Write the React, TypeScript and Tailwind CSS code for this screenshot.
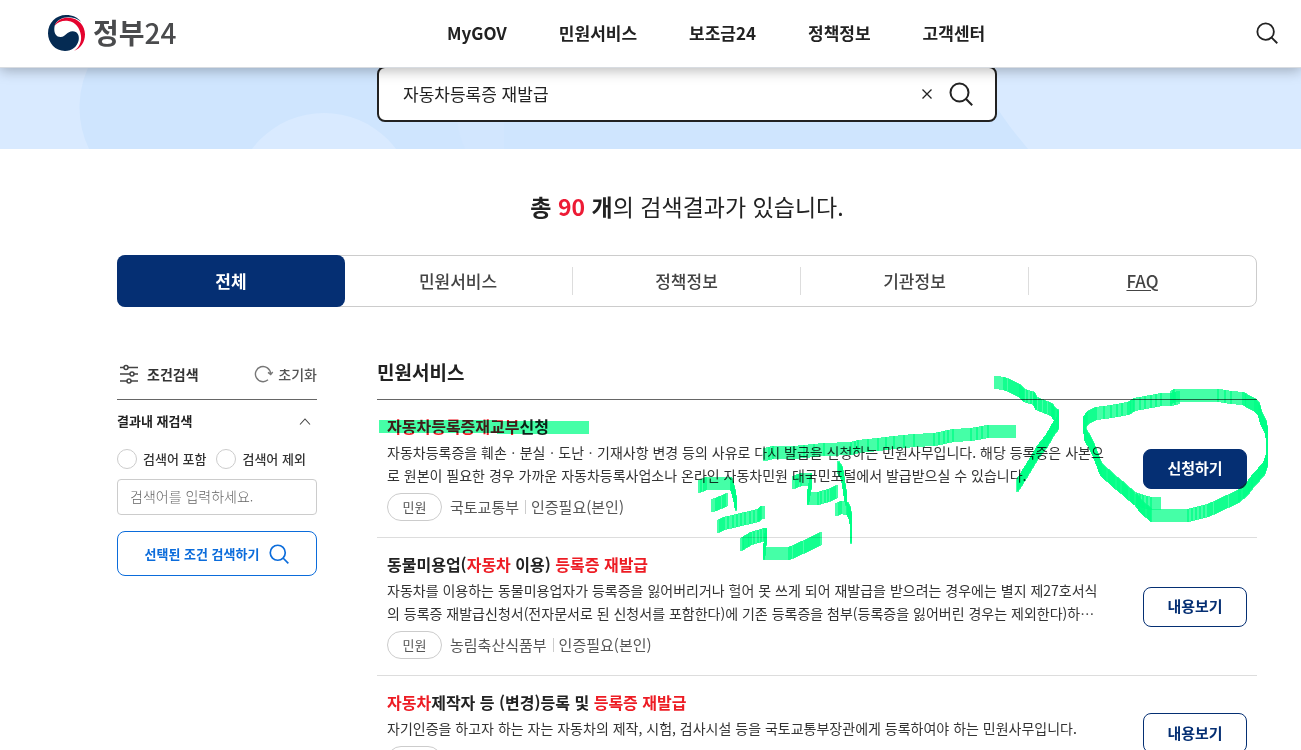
import React from "react";

type Point = [number, number];
type Part = { text: string; hit?: boolean };
type Result = {
  title: Part[];
  lines: string[];
  agency: string;
  action: string;
  primary?: boolean;
};

const navItems = ["MyGOV", "민원서비스", "보조금24", "정책정보", "고객센터"];
const tabs = ["전체", "민원서비스", "정책정보", "기관정보", "FAQ"];

const results: Result[] = [
  {
    title: [{ text: "자동차등록증재교부", hit: true }, { text: "신청" }],
    lines: [
      "자동차등록증을 훼손ㆍ분실ㆍ도난ㆍ기재사항 변경 등의 사유로 다시 발급을 신청하는 민원사무입니다. 해당 등록증은 사본으",
      "로 원본이 필요한 경우 가까운 자동차등록사업소나 온라인 자동차민원 대국민포털에서 발급받으실 수 있습니다.",
    ],
    agency: "국토교통부",
    action: "신청하기",
    primary: true,
  },
  {
    title: [
      { text: "동물미용업(" },
      { text: "자동차", hit: true },
      { text: " 이용) " },
      { text: "등록증 재발급", hit: true },
    ],
    lines: [
      "자동차를 이용하는 동물미용업자가 등록증을 잃어버리거나 헐어 못 쓰게 되어 재발급을 받으려는 경우에는 별지 제27호서식",
      "의 등록증 재발급신청서(전자문서로 된 신청서를 포함한다)에 기존 등록증을 첨부(등록증을 잃어버린 경우는 제외한다)하…",
    ],
    agency: "농림축산식품부",
    action: "내용보기",
  },
  {
    title: [
      { text: "자동차", hit: true },
      { text: "제작자 등 (변경)등록 및 " },
      { text: "등록증 재발급", hit: true },
    ],
    lines: [
      "자기인증을 하고자 하는 자는 자동차의 제작, 시험, 검사시설 등을 국토교통부장관에게 등록하여야 하는 민원사무입니다.",
    ],
    agency: "국토교통부",
    action: "내용보기",
  },
];

// Top-left positions of an upright marker nib along each stroke.
const strokes: Point[][] = [
  [[379, 420], [495, 420]],
  [[497, 421], [587, 421]],
  [[763, 448], [772, 446], [793, 446], [823, 443], [850, 442], [857, 440], [877, 438], [893, 436], [913, 434], [933, 433], [952, 429], [970, 428], [987, 425], [1014, 425]],
  [[994, 376], [1003, 377], [1012, 381], [1018, 384], [1023, 389], [1033, 392], [1035, 397], [1040, 399], [1050, 403], [1053, 407], [1057, 410], [1057, 416], [1052, 423], [1045, 435], [1037, 445], [1025, 465], [1016, 479]],
  [[1159, 497], [1150, 497], [1142, 495], [1133, 492], [1123, 483], [1113, 475], [1100, 463], [1095, 450], [1090, 438], [1084, 428], [1083, 416], [1087, 411], [1095, 407], [1110, 405], [1127, 402], [1133, 398], [1150, 395], [1160, 393], [1170, 393], [1178, 391]],
  [[1170, 391], [1173, 389], [1217, 389], [1230, 391], [1242, 392], [1245, 394], [1253, 398], [1258, 403], [1260, 412], [1265, 422], [1266, 430], [1266, 453], [1263, 462], [1253, 473], [1246, 482], [1237, 490], [1220, 498], [1207, 504], [1187, 509], [1150, 509], [1140, 500], [1135, 494]],
  [[698, 480], [705, 477], [730, 477], [733, 487], [735, 498]],
  [[711, 499], [715, 498], [726, 493]],
  [[717, 520], [723, 517], [740, 513], [757, 509], [760, 506], [763, 506]],
  [[740, 538], [750, 532], [763, 528], [765, 528], [763, 547], [788, 547], [797, 543], [808, 538], [820, 532]],
  [[792, 476], [800, 473], [810, 473], [807, 492], [817, 492], [830, 488], [836, 485]],
  [[837, 461], [841, 467], [843, 480], [845, 493]],
  [[835, 503], [840, 501], [846, 502], [849, 507], [850, 517], [850, 531]],
];

const NIB_W = 2;
const NIB_H = 13;

function sweep([ax, ay]: Point, [bx, by]: Point): string {
  const [l, r] = ax <= bx ? [[ax, ay], [bx, by]] : [[bx, by], [ax, ay]];
  const down = r[1] >= l[1];
  const pts = down
    ? [[l[0], l[1]], [l[0] + NIB_W, l[1]], [r[0] + NIB_W, r[1]], [r[0] + NIB_W, r[1] + NIB_H], [r[0], r[1] + NIB_H], [l[0], l[1] + NIB_H]]
    : [[l[0], l[1]], [r[0], r[1]], [r[0] + NIB_W, r[1]], [r[0] + NIB_W, r[1] + NIB_H], [l[0] + NIB_W, l[1] + NIB_H], [l[0], l[1] + NIB_H]];
  return pts.map((p) => p.join(",")).join(" ");
}

function segments(points: Point[]): string[] {
  const out: string[] = [];
  for (let i = 1; i < points.length; i++) {
    const [ax, ay] = points[i - 1];
    const [bx, by] = points[i];
    const n = Math.max(1, Math.abs(by - ay));
    for (let k = 0; k < n; k++) {
      const at = (t: number): Point => [Math.round(ax + (bx - ax) * t), Math.round(ay + (by - ay) * t)];
      out.push(sweep(at(k / n), at((k + 1) / n)));
    }
  }
  return out;
}

function MarkerNotes() {
  return (
    <svg
      aria-hidden="true"
      width="1301"
      height="750"
      viewBox="0 0 1301 750"
      className="pointer-events-none absolute top-0 left-0 z-10 mix-blend-multiply"
    >
      <g fill="#00ff87" fillOpacity="0.73" shapeRendering="crispEdges">
        {strokes.flatMap((s, i) => segments(s).map((p, k) => <polygon key={`${i}-${k}`} points={p} />))}
      </g>
    </svg>
  );
}

function SearchIcon({ className }: { className: string }) {
  return (
    <svg viewBox="0 0 24 24" fill="none" stroke="currentColor" strokeWidth="2" className={className} aria-hidden="true">
      <circle cx="10.5" cy="10.5" r="9" />
      <path d="M16.8 16.8 23.2 23.2" />
    </svg>
  );
}

function Emblem() {
  return (
    <svg viewBox="0 0 111 108" className="h-9 w-[37px]" aria-hidden="true">
      <path
        fill="#052b53"
        d="M51 108C22 108 0 84 0 55C0 24 24 0 54 0C74 0 90 8 99 20C88 11 76 7 61 7C42 7 26 16 20 32C16 50 22 66 38 66C54 66 56 49 74 49C88 49 95 62 92 76C88 95 72 108 51 108Z"
      />
      <path
        fill="#e4032e"
        d="M20 32C27 14 45 7 62 8C92 9 111 32 111 58C111 83 97 101 78 108C94 97 101 80 99 62C96 38 82 21 61 18C45 16 30 20 20 32Z"
      />
    </svg>
  );
}

function Header() {
  return (
    <header className="sticky top-0 z-20 flex h-[68px] items-center border-b border-[#d8dce1] bg-white pr-5 pb-[2px] pl-12 shadow-[0_3px_12px_rgba(0,0,0,0.26)]">
      <a href="#home" className="flex w-[399px] items-center gap-2">
        <Emblem />
        <span className="pb-[2px] text-[28px] leading-8 font-medium text-[#4a4b4d]">
          <strong className="font-bold">정부</strong>24
        </span>
      </a>
      <nav aria-label="주 메뉴" className="flex flex-1 items-center gap-[52px] text-[17px] leading-7 font-bold text-[#222]">
        {navItems.map((n) => (
          <a key={n} href="#menu" className="whitespace-nowrap">
            {n}
          </a>
        ))}
      </nav>
      <button type="button" aria-label="검색 열기" className="p-[3px]">
        <SearchIcon className="size-[22px] text-[#222]" />
      </button>
    </header>
  );
}

function Banner() {
  return (
    <div className="relative -mt-2 h-[89px] overflow-hidden bg-[#d9eaff] pt-[6px] pr-11 pl-[117px]">
      <svg aria-hidden="true" width="1301" height="89" viewBox="0 60 1301 89" className="absolute top-0 left-0">
        <path fill="#cfe5fe" d="M89 149A96 96 0 0 1 92 60H975C982 90 1003 119 1028 149Z" />
        <circle cx="324" cy="203" r="90" fill="#d9eaff" />
        <path fill="#d2e6fe" d="M457 120Q459 136 465 149H504V120Z" />
      </svg>
      <form
        role="search"
        onSubmit={(e) => e.preventDefault()}
        className="relative mx-auto flex h-14 max-w-[620px] items-center rounded-lg border-2 border-[#222] bg-white pr-[22px] pl-6"
      >
        <input
          type="text"
          aria-label="통합검색"
          defaultValue="자동차등록증 재발급"
          className="min-w-0 flex-1 text-[17px] leading-7 text-[#222] outline-none"
        />
        <button type="button" aria-label="검색어 지우기" className="mr-4 p-px">
          <svg viewBox="0 0 10 10" className="size-[10px]" fill="none" stroke="#222" strokeWidth="1.3" aria-hidden="true">
            <path d="M.5.5 9.5 9.5M9.5.5.5 9.5" />
          </svg>
        </button>
        <button type="submit" aria-label="검색">
          <SearchIcon className="size-6 text-[#222]" />
        </button>
      </form>
    </div>
  );
}

function Filters() {
  return (
    <aside className="w-[200px] shrink-0">
      <div className="flex h-[50px] items-center justify-between border-b border-[#666] pb-[2px]">
        <h2 className="flex items-center gap-2 pl-[2px] text-sm font-bold text-[#333]">
          <svg viewBox="0 0 20 20" className="size-5" fill="none" stroke="#444" strokeWidth="1.5" aria-hidden="true">
            <path d="M1 3.5h4M9 3.5h10M1 10h10M15 10h4M1 17h7M12 17h7" />
            <circle cx="7" cy="3.5" r="2" />
            <circle cx="13" cy="10" r="2" />
            <circle cx="10" cy="17" r="2" />
          </svg>
          조건검색
        </h2>
        <button type="button" className="flex items-center gap-1 text-sm font-medium text-[#555]">
          <svg viewBox="0 0 20 20" className="size-5" fill="none" stroke="#777" strokeWidth="1.4" aria-hidden="true">
            <path d="M14 15.8A7.6 7.6 0 1 1 16.6 9.5M14 8.4l2.7 2.2 2-2.6" />
          </svg>
          초기화
        </button>
      </div>
      <button type="button" className="flex w-full items-center justify-between pt-[10px] pr-[6px] pb-px text-[13px] leading-[22px] font-bold text-[#222]">
        결과내 재검색
        <svg viewBox="0 0 12 7" className="h-[7px] w-3" fill="none" stroke="#444" strokeWidth="1.1" aria-hidden="true">
          <path d="M1 6.5 6 1l5 5.5" />
        </svg>
      </button>
      <form onSubmit={(e) => e.preventDefault()}>
        <fieldset aria-label="검색어 조건" className="mt-4 flex h-5 items-center gap-[10px] text-[13px] font-medium text-[#333]">
          {["검색어 포함", "검색어 제외"].map((l) => (
            <label key={l} className="flex items-center gap-[6px] whitespace-nowrap">
              <input type="radio" name="mode" className="size-5 appearance-none rounded-full border border-[#ccc] bg-white checked:border-[6px] checked:border-[#0b6cdb]" />
              {l}
            </label>
          ))}
        </fieldset>
        <input
          type="text"
          aria-label="결과 내 검색어"
          placeholder="검색어를 입력하세요."
          className="mt-[10px] h-9 w-full rounded border border-[#ccc] px-3 pb-[2px] text-sm font-light placeholder:text-[#666]"
        />
        <button
          type="submit"
          className="mt-4 flex h-[45px] w-full items-center justify-center gap-[10px] rounded-lg border border-[#0b6cdb] text-[13px] font-bold text-[#0b6cdb]"
        >
          선택된 조건 검색하기
          <SearchIcon className="size-5" />
        </button>
      </form>
    </aside>
  );
}

function ResultItem({ item }: { item: Result }) {
  return (
    <li className="flex items-center justify-between border-b border-[#ddd] px-[10px] py-4">
      <div className="min-w-0">
        <h3 className="text-base leading-5 font-bold text-[#222]">
          <a href="#detail">
            {item.title.map((p, i) => (
              <span key={i} className={p.hit ? "text-[#ed1c24]" : undefined}>
                {p.text}
              </span>
            ))}
          </a>
        </h3>
        <p className="mt-[5px] text-sm leading-[23px] whitespace-nowrap text-[#333]">
          {item.lines.map((l) => (
            <span key={l} className="block">
              {l}
            </span>
          ))}
        </p>
        <div className="mt-[6px] flex h-7 items-center text-[15px] text-[#555]">
          <span className="mr-2 flex h-7 w-[55px] items-center justify-center rounded-full border border-[#ccc] text-[13px]">민원</span>
          <span className="leading-7">{item.agency}</span>
          <span className="ml-[6px] flex h-[14px] items-center border-l border-[#ccc] pl-[5px]">인증필요(본인)</span>
        </div>
      </div>
      <a
        href="#open"
        className={
          item.primary
            ? "flex h-10 w-[104px] shrink-0 items-center justify-center rounded-lg border border-[#052f73] bg-[#052f73] text-[15px] font-bold text-white"
            : "flex h-10 w-[104px] shrink-0 items-center justify-center rounded-lg border border-[#052f73] bg-white text-[15px] font-bold text-[#052f73]"
        }
      >
        {item.action}
      </a>
    </li>
  );
}

export default function App() {
  return (
    <div className="relative bg-white font-['Noto_Sans_CJK_KR',sans-serif]" lang="ko">
      <Header />
      <Banner />
      <main className="pr-11 pl-[117px]">
        <h1 className="pt-[39px] text-center text-[23px] leading-9 text-[#222]">
          <strong className="font-bold">
            총 <span className="text-[#ed1b35]">90</span> 개
          </strong>
          의 검색결과가 있습니다.
        </h1>
        <div role="tablist" className="mt-[31px] flex h-[52px] rounded-lg border border-[#ccc]">
          {tabs.map((t, i) => (
            <button
              key={t}
              type="button"
              role="tab"
              aria-selected={i === 0}
              className={
                i === 0
                  ? "-m-px flex-1 rounded-lg bg-[#052f73] text-[17px] font-bold text-white"
                  : "flex flex-1 items-center text-[17px] font-medium text-[#444]"
              }
            >
              {i === 0 ? (
                t
              ) : (
                <span
                  className={
                    i === 1
                      ? "flex-1 leading-7"
                      : i === 4
                        ? "flex-1 border-l border-[#ddd] leading-7 underline underline-offset-2"
                        : "flex-1 border-l border-[#ddd] leading-7"
                  }
                >
                  {t}
                </span>
              )}
            </button>
          ))}
        </div>
        <div className="mt-[43px] flex gap-[60px]">
          <Filters />
          <section className="min-w-0 flex-1">
            <h2 className="flex h-[50px] items-center border-b border-[#666] pb-1 text-[19px] font-bold text-[#222]">민원서비스</h2>
            <ul>
              {results.map((r, i) => (
                <ResultItem key={i} item={r} />
              ))}
            </ul>
          </section>
        </div>
      </main>
      <MarkerNotes />
    </div>
  );
}
